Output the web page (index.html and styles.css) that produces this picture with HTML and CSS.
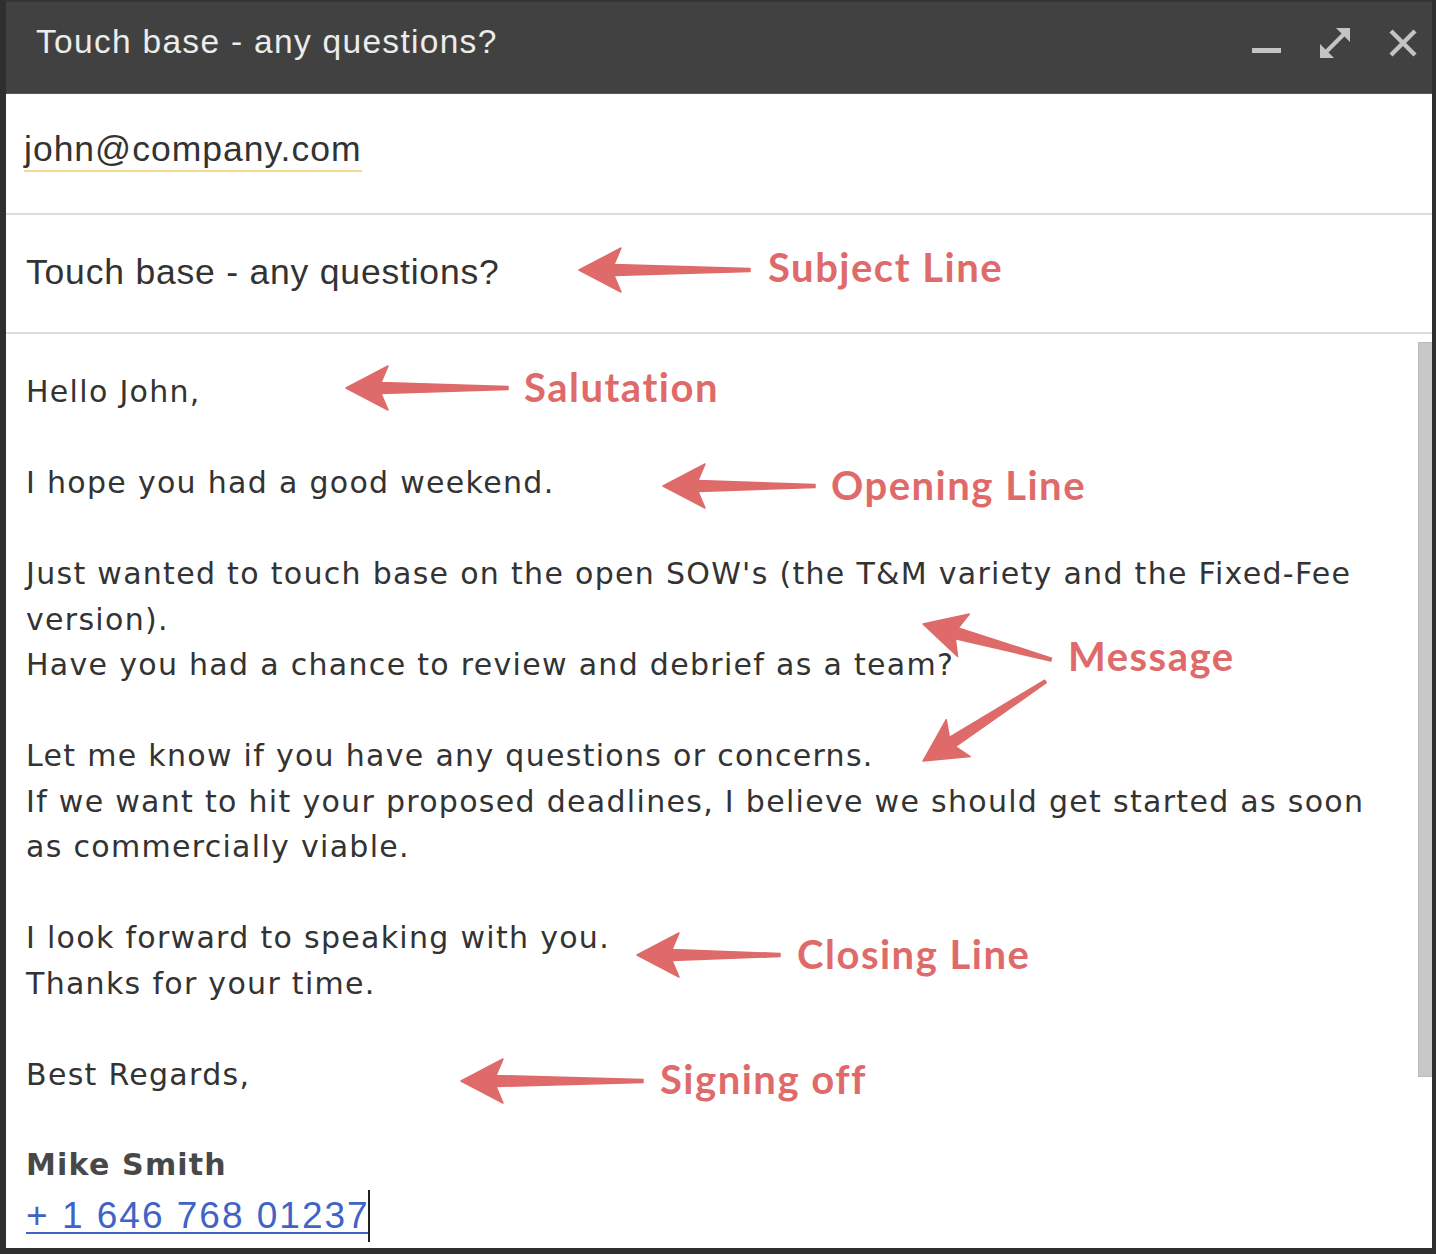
FILE: index.html
```html
<!DOCTYPE html>
<html>
<head>
<meta charset="utf-8">
<link rel="stylesheet" href="styles.css">
</head>
<body>
<div class="window">
  <div class="titlebar">
    <div class="title">Touch base - any questions?</div>
    <div class="controls">
      <svg class="ic" width="32" height="34" viewBox="0 0 32 34"><rect x="2" y="22" width="29" height="5" fill="#c4c4c4"/></svg>
      <svg class="ic" width="34" height="34" viewBox="0 0 34 34"><g stroke="#c4c4c4" stroke-width="4" fill="none"><line x1="6" y1="28" x2="28" y2="6"/></g><polygon points="2,32 2,18 16,32" fill="#c4c4c4"/><polygon points="32,2 32,16 18,2" fill="#c4c4c4"/></svg>
      <svg class="ic" width="30" height="30" viewBox="0 0 30 30"><g stroke="#c4c4c4" stroke-width="4.5"><line x1="3" y1="3" x2="27" y2="27"/><line x1="27" y1="3" x2="3" y2="27"/></g></svg>
    </div>
  </div>
  <div class="row to-row"><span class="to">john@company.com</span></div>
  <div class="row subject-row"><span class="subject">Touch base - any questions?</span></div>
  <div class="body">
    <div class="content">
      <p>Hello John,</p>
      <p>I hope you had a good weekend.</p>
      <p>Just wanted to touch base on the open SOW's (the T&amp;M variety and the Fixed-Fee version).<br>Have you had a chance to review and debrief as a team?</p>
      <p>Let me know if you have any questions or concerns.<br>If we want to hit your proposed deadlines, I believe we should get started as soon as commercially viable.</p>
      <p>I look forward to speaking with you.<br>Thanks for your time.</p>
      <p>Best Regards,</p>
      <p class="sig"><b class="name">Mike Smith</b></p>
      <p class="phone-line"><span class="phone">+ 1 646 768 01237</span><span class="caret"></span></p>
    </div>
    <div class="scrollbar"></div>
  </div>

  <svg class="arrows" width="1436" height="1254" viewBox="0 0 1436 1254">
    <g fill="#df6a6a" stroke="#df6a6a" stroke-width="1.5" stroke-linejoin="round">
      <path transform="translate(579 270)" d="M0 0 L42 -22 L35 -5.5 L171 -1.5 L171 1.5 L35 5.5 L42 22 Z"/>
      <path transform="translate(346 388)" d="M0 0 L42 -22 L35 -5.5 L162 -1.5 L162 1.5 L35 5.5 L42 22 Z"/>
      <path transform="translate(663 486)" d="M0 0 L42 -22 L35 -5.5 L152 -1.5 L152 1.5 L35 5.5 L42 22 Z"/>
      <path transform="translate(923 624) rotate(15.5)" d="M0 0 L42 -22 L35 -5.5 L133 -1.5 L133 1.5 L35 5.5 L42 22 Z"/>
      <path transform="translate(923 761) rotate(-33)" d="M0 0 L42 -22 L35 -5.5 L146 -1.5 L146 1.5 L35 5.5 L42 22 Z"/>
      <path transform="translate(637 955)" d="M0 0 L42 -22 L35 -5.5 L143 -1.5 L143 1.5 L35 5.5 L42 22 Z"/>
      <path transform="translate(461 1081)" d="M0 0 L42 -22 L35 -5.5 L182 -1.5 L182 1.5 L35 5.5 L42 22 Z"/>
    </g>
  </svg>
  <div class="label l-subject">Subject Line</div>
  <div class="label l-salutation">Salutation</div>
  <div class="label l-opening">Opening Line</div>
  <div class="label l-message">Message</div>
  <div class="label l-closing">Closing Line</div>
  <div class="label l-signing">Signing off</div>
</div>
</body>
</html>
```

FILE: styles.css
```css
html, body { margin: 0; padding: 0; }
body { background: #2f2f2f; width: 1436px; height: 1254px; overflow: hidden; }
.window {
  position: relative;
  box-sizing: border-box;
  width: 1436px;
  height: 1254px;
  border-left: 6px solid #2f2f2f;
  border-right: 4px solid #2f2f2f;
  border-bottom: 6px solid #2f2f2f;
  border-top: 2px solid #333;
  background: #fff;
  display: flex;
  flex-direction: column;
}
.titlebar {
  height: 91px;
  background: #414141;
  display: flex;
  align-items: center;
  justify-content: space-between;
  padding: 0 14px 0 30px;
  flex: none;
  border-bottom: 1px solid #555;
}
.title {
  font-family: "Liberation Sans", Arial, sans-serif;
  font-size: 33.5px;
  letter-spacing: 1.3px;
  color: #ececec;
  margin-top: -12px;
}
.controls { display: flex; align-items: center; gap: 36px; margin-top: -10px; }
.ic { display: block; }
.row {
  flex: none;
  border-bottom: 2px solid #dcdcdc;
  display: flex;
  align-items: center;
  padding-left: 18px;
  font-family: "Liberation Sans", Arial, sans-serif;
  color: #333;
}
.to-row { height: 119px; }
.to {
  font-size: 35.5px;
  letter-spacing: 1px;
  border-bottom: 2px solid #f3d98f;
  line-height: 38px;
  padding-bottom: 2px;
  margin-top: -6px;
}
.subject-row { height: 117px; padding-left: 20px; }
.subject { font-size: 35.5px; letter-spacing: 0.8px; margin-top: -2px; }
.body {
  flex: 1;
  display: flex;
  position: relative;
}
.content {
  flex: 1;
  padding: 35px 30px 0 20px;
  font-family: "DejaVu Sans", Verdana, sans-serif;
  font-size: 30px;
  letter-spacing: 1.3px;
  line-height: 45.5px;
  color: #333;
}
.content p { margin: 0 0 45.5px 0; }
.content p.sig { margin: 0; line-height: 43px; }
.name { font-weight: bold; color: #484848; letter-spacing: 1.2px; }
.content p.phone-line { margin: 0; line-height: 60px; }
.phone {
  font-family: "Liberation Sans", Arial, sans-serif;
  font-size: 37px;
  letter-spacing: 2px;
  color: #3f63c6;
  text-decoration: underline;
  text-decoration-thickness: 2px;
  text-underline-offset: 4px;
}
.caret {
  display: inline-block;
  width: 2px;
  height: 52px;
  background: #222;
  vertical-align: -14px;
  margin-left: -2px;
}
.scrollbar {
  width: 13px;
  margin-top: 8px;
  height: 733px;
  background: #c8c8c8;
  border: 1px solid #bbb;
  border-right: none;
  flex: none;
}
.arrows { position: absolute; left: -6px; top: -2px; pointer-events: none; }
.label {
  position: absolute;
  font-family: Lato, "Open Sans", sans-serif;
  font-weight: bold;
  font-size: 40px;
  letter-spacing: 1.5px;
  color: #df6a6a;
  line-height: 1;
  white-space: nowrap;
}
.l-subject { left: 762px; top: 245px; }
.l-salutation { left: 518px; top: 365px; }
.l-opening { left: 825px; top: 463px; }
.l-message { left: 1062px; top: 634px; }
.l-closing { left: 791px; top: 932px; }
.l-signing { left: 654px; top: 1057px; }
```
